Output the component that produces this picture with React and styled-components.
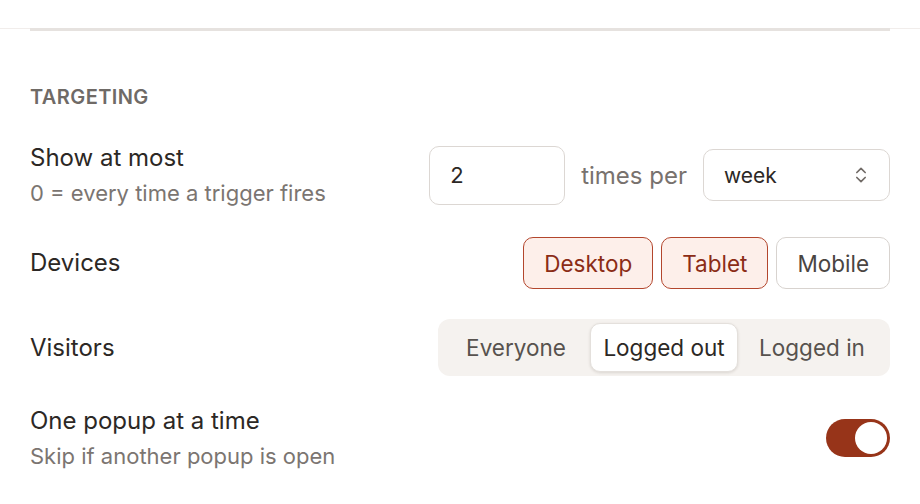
import { useState } from 'react';
import styled, { createGlobalStyle } from 'styled-components';
import { ChevronsUpDown } from 'lucide-react';

const GlobalStyle = createGlobalStyle`
    html, body {
        margin: 0;
        padding: 0;
        background: #ffffff;
        font-family: Inter, "Noto Sans", "Liberation Sans", sans-serif;
        color: #2c2825;
    }
`

const Page = styled.div`
    width: 920px;
    padding-top: 28px;
`

const TopRule = styled.div`
    border-top: 1px solid #f1edeb;
    & > div {
        margin: -1px 30px 0;
        height: 3px;
        background: #e6e2df;
    }
`

const Section = styled.section`
    padding: 54px 30px 0;
`

const SectionTitle = styled.h3`
    margin: 0 0 34px;
    font-size: 20px;
    line-height: 24px;
    font-weight: 600;
    letter-spacing: 0.4px;
    text-transform: uppercase;
    color: #6f6a66;
`

const Rows = styled.div`
    display: flex;
    flex-direction: column;
    gap: 30px;
`

const Row = styled.div`
    display: flex;
    align-items: center;
    justify-content: space-between;
`

const Label = styled.div`
    font-size: 24px;
    line-height: 30px;
    color: #2c2825;
`

const Hint = styled.div`
    margin-top: 6px;
    font-size: 22px;
    line-height: 28px;
    color: #7b7571;
`

const Controls = styled.div`
    display: flex;
    align-items: center;
    gap: ${p => p.gap || 8}px;
`

const NumberInput = styled.input`
    box-sizing: border-box;
    width: 136px;
    height: 59px;
    padding: 0 20px;
    border: 1.5px solid #dcd7d3;
    border-radius: 10px;
    font: inherit;
    font-size: 22px;
    color: #2c2825;
    outline: none;
`

const Muted = styled.span`
    font-size: 24px;
    color: #78726e;
`

const SelectBox = styled.div`
    box-sizing: border-box;
    width: 187px;
    height: 52px;
    padding: 0 18px 0 20px;
    border: 1.5px solid #dcd7d3;
    border-radius: 10px;
    display: flex;
    align-items: center;
    justify-content: space-between;
    font-size: 21px;
    color: #2c2825;
`

const Chip = styled.button`
    box-sizing: border-box;
    height: 52px;
    padding: 0 20px;
    border-radius: 10px;
    font: inherit;
    font-size: 22.5px;
    cursor: pointer;
    border: 1.5px solid ${p => (p.active ? '#b3462d' : '#d8d3cf')};
    background: ${p => (p.active ? '#fdefea' : '#ffffff')};
    color: ${p => (p.active ? '#8b2c16' : '#4a4542')};
`

const Segmented = styled.div`
    display: grid;
    grid-template-columns: repeat(3, 148px);
    padding: 4px;
    background: #f5f2ef;
    border-radius: 12px;
`

const Segment = styled.button`
    height: 49px;
    border: 1px solid ${p => (p.active ? '#e4e0dc' : 'transparent')};
    border-radius: 10px;
    background: ${p => (p.active ? '#ffffff' : 'transparent')};
    box-shadow: ${p => (p.active ? '0 1px 3px rgba(60, 40, 30, 0.14)' : 'none')};
    font: inherit;
    font-size: 22.5px;
    color: ${p => (p.active ? '#2c2825' : '#57524e')};
    cursor: pointer;
`

const Switch = styled.button`
    box-sizing: border-box;
    width: 64px;
    height: 38px;
    padding: 3px;
    border: none;
    border-radius: 19px;
    background: ${p => (p.on ? '#973419' : '#d8d3cf')};
    display: flex;
    justify-content: ${p => (p.on ? 'flex-end' : 'flex-start')};
    cursor: pointer;
    & > span {
        width: 32px;
        height: 32px;
        border-radius: 50%;
        background: #ffffff;
    }
`

const devices = ['Desktop', 'Tablet', 'Mobile']
const visitors = ['Everyone', 'Logged out', 'Logged in']

const App = () => {
    const [picked, setPicked] = useState({ Desktop: true, Tablet: true, Mobile: false })
    const [visitor, setVisitor] = useState('Logged out')
    const [single, setSingle] = useState(true)

    const toggleDevice = (d) => setPicked({ ...picked, [d]: !picked[d] })

    return (
        <Page>
            <GlobalStyle />
            <TopRule><div /></TopRule>
            <Section>
                <SectionTitle>Targeting</SectionTitle>
                <Rows>
                    <Row>
                        <div>
                            <Label>Show at most</Label>
                            <Hint>0 = every time a trigger fires</Hint>
                        </div>
                        <Controls gap={16}>
                            <NumberInput defaultValue="2" />
                            <Muted>times per</Muted>
                            <SelectBox>
                                week
                                <ChevronsUpDown size={20} color="#716b67" strokeWidth={2} />
                            </SelectBox>
                        </Controls>
                    </Row>

                    <Row>
                        <Label>Devices</Label>
                        <Controls>
                            {devices.map(d => (
                                <Chip key={d} active={picked[d]} onClick={() => toggleDevice(d)}>{d}</Chip>
                            ))}
                        </Controls>
                    </Row>

                    <Row>
                        <Label>Visitors</Label>
                        <Segmented>
                            {visitors.map(v => (
                                <Segment key={v} active={visitor === v} onClick={() => setVisitor(v)}>{v}</Segment>
                            ))}
                        </Segmented>
                    </Row>

                    <Row>
                        <div>
                            <Label>One popup at a time</Label>
                            <Hint>Skip if another popup is open</Hint>
                        </div>
                        <Switch on={single} onClick={() => setSingle(!single)}><span /></Switch>
                    </Row>
                </Rows>
            </Section>
        </Page>
    );
};

export default App;
